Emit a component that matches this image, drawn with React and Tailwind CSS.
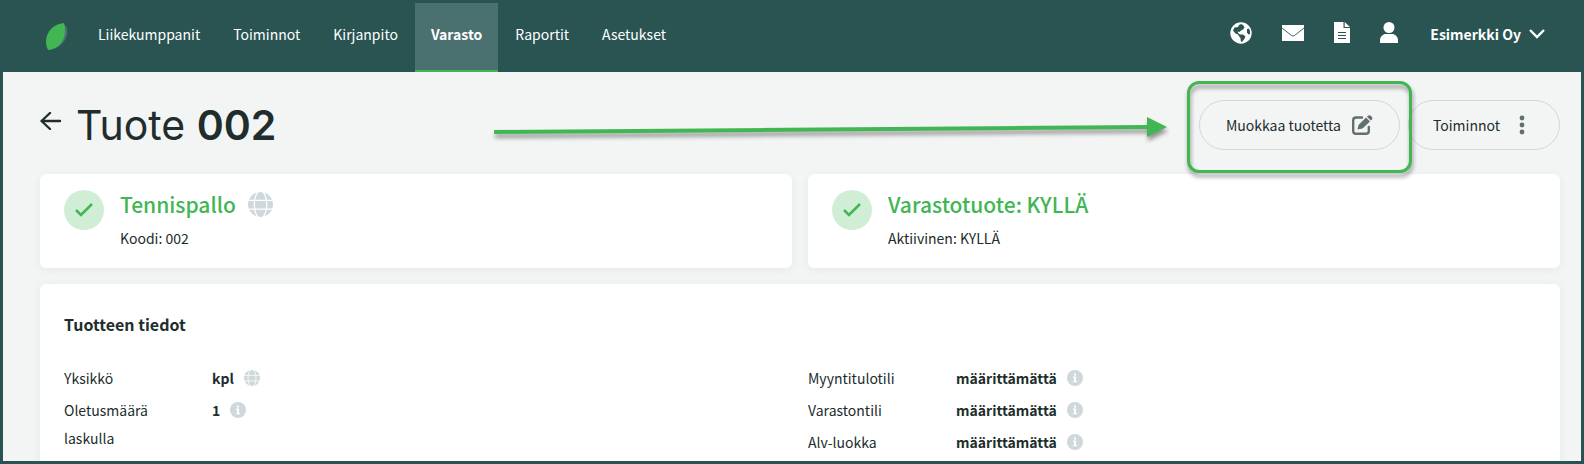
import React from 'react';

const NAV_ITEMS = ['Liikekumppanit', 'Toiminnot', 'Kirjanpito', 'Varasto', 'Raportit', 'Asetukset'];

const LeafLogo = () => (
  <svg width="22" height="28" viewBox="0 0 22 28">
    <path d="M18 2C22 3 22 10 20 15C17 22 9 27 3 27Z" fill="#4c7270" />
    <path d="M18 0C8 1 0 8 0 19C0 22 1 25 2 27C12 26 19 18 19 8C19 5 19 2 18 0Z" fill="#41b653" />
  </svg>
);

const EarthIcon = () => (
  <svg width="22" height="22" viewBox="0 0 22 22">
    <circle cx="11" cy="11" r="10.700" fill="#fff" />
    <path
      d="M11.500 2L13.500 3.500L14.500 5.500L13 7.500L11 8.500L9.500 10L7.500 9.500L8.500 11.500L10 12.500L13 12.500L15.500 14.500L14 17.500L11.800 20L10.800 19L10.500 16L8.800 14L8 12.500L5.500 11.500L3 8.500L4.500 5.500L8 5L9 3Z"
      fill="#295452"
    />
    <path d="M17 7L19 6.500L20 9V12L18.500 12.500L17 10.500Z" fill="#295452" />
  </svg>
);

const MailIcon = () => (
  <svg width="22" height="16" viewBox="0 0 22 16">
    <path d="M0 0H22V16H0Z" fill="#fff" />
    <path d="M0 3L9.500 10.500Q11 11.600 12.500 10.500L22 3" fill="none" stroke="#295452" strokeWidth="0.900" />
  </svg>
);

const DocumentIcon = () => (
  <svg width="16" height="21" viewBox="0 0 16 21">
    <path d="M0 0H9.500V6H16V21H0Z" fill="#fff" />
    <path d="M10.700 0L16 4.900H10.700Z" fill="#fff" />
    <path d="M4 10.500H12M4 13.500H12M4 16.500H12" stroke="#295452" strokeWidth="1" />
  </svg>
);

const PersonIcon = () => (
  <svg width="18" height="21" viewBox="0 0 18 21">
    <circle cx="9" cy="5.500" r="5.500" fill="#fff" />
    <path d="M0 21V18.500C0 14.500 3 12 6 12H12C15 12 18 14.500 18 18.500V21Z" fill="#fff" />
  </svg>
);

const GlobeIcon = ({ size }) => (
  <svg width={size} height={size} viewBox="0 0 24 24">
    <circle cx="12" cy="12" r="12" fill="#cfd8da" />
    <path d="M0 8H24M0 16.500H24" stroke="#fff" strokeWidth="1.200" />
    <ellipse cx="12" cy="12" rx="6" ry="13" fill="none" stroke="#fff" strokeWidth="1.200" />
  </svg>
);

const InfoIcon = () => (
  <svg width="16" height="16" viewBox="0 0 16 16">
    <circle cx="8" cy="8" r="8" fill="#cfd8da" />
    <path d="M7 3.500H9V5.500H7ZM6 6.500H9V11H10V12.200H6V11H7V7.700H6Z" fill="#fff" />
  </svg>
);

const EditIcon = () => (
  <svg width="21" height="20" viewBox="0 0 21 20">
    <path
      d="M10 2.500H4Q1.200 2.500 1.200 5.300V16Q1.200 18.800 4 18.800H14Q16.800 18.800 16.800 16V12"
      fill="none"
      stroke="#61706f"
      strokeWidth="2.400"
      strokeLinecap="round"
    />
    <path d="M5.500 14.500L6.500 10L14 2.500L18 6.500L10.500 13.500Z" fill="#61706f" />
    <path d="M15 1.700L16 0.700Q17.500 -0.400 19 1L19.700 1.700Q21 3.200 19.800 4.500L18.800 5.500Z" fill="#61706f" />
  </svg>
);

const StatusCard = ({ title, subtitle, icon }) => (
  <section className="flex-1 flex gap-4 bg-white rounded-md px-6 pt-4 pb-[18px] shadow-[0_2px_8px_rgba(41,84,82,0.08)]">
    <div className="w-10 h-10 rounded-full bg-[#d0edd6] flex items-center justify-center">
      <svg width="18" height="14" viewBox="0 0 18 14">
        <path d="M1 7L6 12L17 1" fill="none" stroke="#41b653" strokeWidth="2.500" />
      </svg>
    </div>
    <div>
      <h2 className="flex items-center gap-3 text-[21px] leading-7 font-medium text-[#41b653]">
        {title}
        {icon}
      </h2>
      <p className="mt-2 text-sm leading-6">{subtitle}</p>
    </div>
  </section>
);

const DetailRow = ({ label, value, icon }) => (
  <div className="flex">
    <dt className="w-[148px] pr-12 leading-7">{label}</dt>
    <dd className="flex items-center gap-[10px] h-7 font-bold">
      {value}
      {icon}
    </dd>
  </div>
);

const App = () => {
  return (
    <div className="h-screen flex flex-col overflow-hidden border-3 border-[#295452] bg-[#f3f5f5] text-sm text-[#212d2d] font-['Noto_Sans_CJK_SC','Source_Sans_Pro',sans-serif]">
      <header className="shrink-0 flex items-stretch justify-between h-[69px] pl-[43px] pr-9 bg-[#295452] text-white">
        <nav className="flex items-stretch gap-px">
          <a href="#" aria-label="Etusivu" className="flex items-center pb-0.5 mr-[13px]">
            <LeafLogo />
          </a>
          {NAV_ITEMS.map((item) => (
            <a
              key={item}
              href="#"
              className={`flex items-center px-4 pb-1.5 border-b-2 ${
                item === 'Varasto' ? 'bg-[#4a706f] border-[#41b653] font-bold' : 'border-transparent'
              }`}
            >
              {item}
            </a>
          ))}
        </nav>
        <div className="flex items-center pb-2">
          <div className="flex items-center gap-[30px] mr-8 pb-0.5">
            <a href="#" aria-label="Kieli"><EarthIcon /></a>
            <a href="#" aria-label="Viestit"><MailIcon /></a>
            <a href="#" aria-label="Asiakirjat"><DocumentIcon /></a>
            <a href="#" aria-label="Profiili"><PersonIcon /></a>
          </div>
          <button className="flex items-center gap-2 font-bold">
            Esimerkki Oy
            <svg width="16" height="10" viewBox="0 0 16 10">
              <path d="M1 1L8 8L15 1" fill="none" stroke="#fff" strokeWidth="2.400" />
            </svg>
          </button>
        </div>
      </header>

      <main className="pl-[37px] pr-[21px] pt-7">
        <div className="flex items-start">
          <div className="flex items-center gap-[14px]">
            <a href="#" aria-label="Takaisin" className="pb-2">
              <svg width="22" height="18" viewBox="0 0 22 18">
                <path
                  d="M10 1L1.500 9L10 17M2 9H20"
                  fill="none"
                  stroke="#212d2d"
                  strokeWidth="2.400"
                  strokeLinecap="round"
                  strokeLinejoin="round"
                />
              </svg>
            </a>
            <h1 className="text-[41px] leading-[50px] font-normal font-[Inter,sans-serif]">
              Tuote <span className="font-semibold">002</span>
            </h1>
          </div>
          <svg
            className="shrink-0 ml-auto mr-8 mt-[17px] overflow-visible drop-shadow-[1px_4px_2px_rgba(0,0,0,0.4)]"
            width="673"
            height="20"
            viewBox="0 0 673 20"
          >
            <path d="M0 15L654 10" stroke="#41b653" strokeWidth="4" />
            <path d="M653 0L673 10L653 20Z" fill="#41b653" />
          </svg>
          <div className="flex gap-2">
            <div className="relative">
              <button className="flex items-center gap-[11px] h-[50px] px-[26px] rounded-full border border-[#cfd8da]">
                Muokkaa tuotetta
                <EditIcon />
              </button>
              <div className="absolute -inset-x-3 -top-[19px] -bottom-[23px] rounded-xl border-3 border-[#41b653] pointer-events-none drop-shadow-[1px_4px_2px_rgba(0,0,0,0.4)]" />
            </div>
            <button className="flex items-center gap-5 h-[50px] pl-6 pr-[35px] rounded-full border border-[#cfd8da]">
              Toiminnot
              <svg width="4" height="18" viewBox="0 0 4 18" fill="#61706f" className="overflow-visible">
                <circle cx="2" cy="2" r="2.400" />
                <circle cx="2" cy="9" r="2.400" />
                <circle cx="2" cy="16" r="2.400" />
              </svg>
            </button>
          </div>
        </div>

        <div className="flex gap-4 mt-6">
          <StatusCard title="Tennispallo" subtitle="Koodi: 002" icon={<GlobeIcon size={25} />} />
          <StatusCard title="Varastotuote: KYLLÄ" subtitle="Aktiivinen: KYLLÄ" />
        </div>

        <section className="mt-4 px-6 pt-7 pb-8 bg-white rounded-md shadow-[0_2px_8px_rgba(41,84,82,0.08)]">
          <h3 className="text-base leading-6 font-bold">Tuotteen tiedot</h3>
          <div className="grid grid-cols-2 gap-x-4 mt-7">
            <dl className="flex flex-col gap-1">
              <DetailRow label="Yksikkö" value="kpl" icon={<GlobeIcon size={16} />} />
              <DetailRow label="Oletusmäärä laskulla" value="1" icon={<InfoIcon />} />
            </dl>
            <dl className="flex flex-col gap-1">
              <DetailRow label="Myyntitulotili" value="määrittämättä" icon={<InfoIcon />} />
              <DetailRow label="Varastontili" value="määrittämättä" icon={<InfoIcon />} />
              <DetailRow label="Alv-luokka" value="määrittämättä" icon={<InfoIcon />} />
            </dl>
          </div>
        </section>
      </main>
    </div>
  );
};

export default App;
